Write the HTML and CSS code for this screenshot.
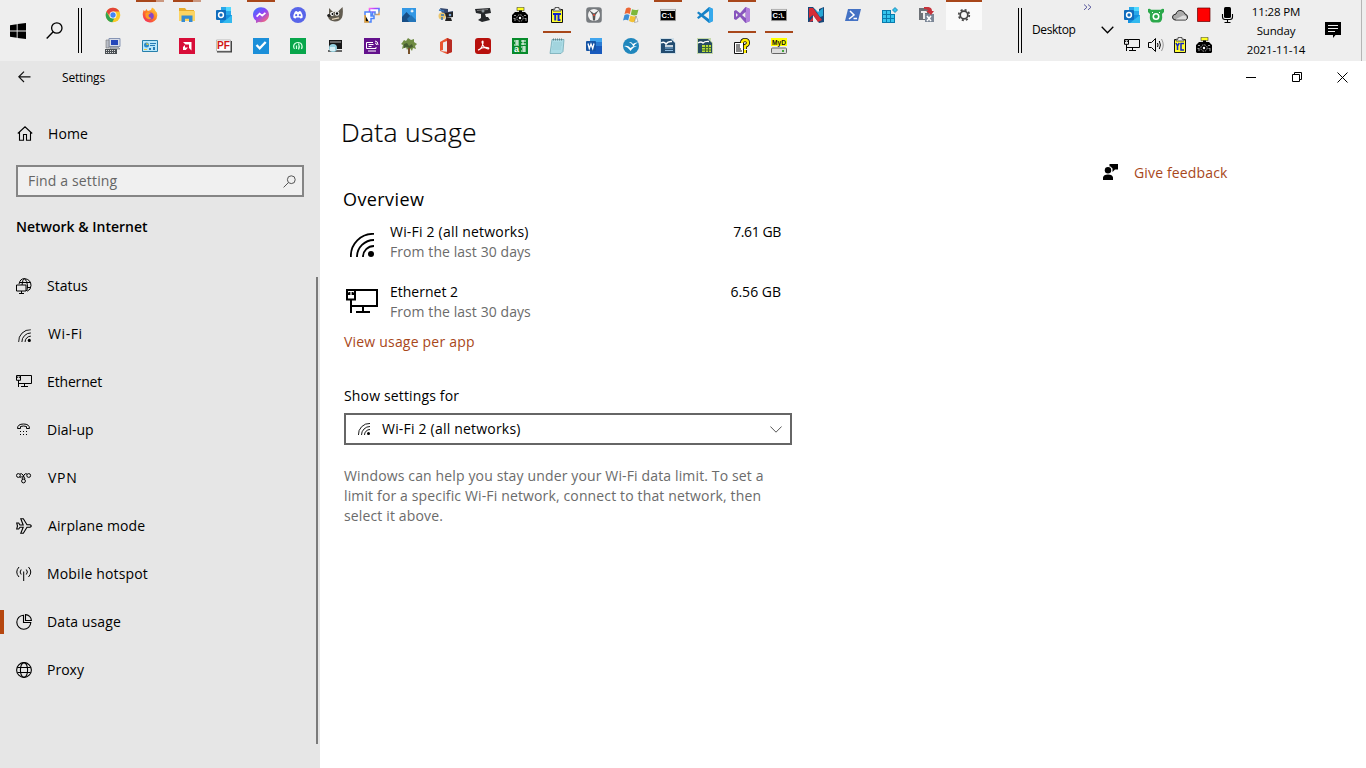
FILE: index.html
```html
<!DOCTYPE html>
<html lang="en">
<head>
<meta charset="utf-8">
<title>Settings</title>
<link rel="stylesheet" href="styles.css">
</head>
<body>
<svg class="defs" width="0" height="0">
  <defs>
    <symbol id="wifi" viewBox="0 0 24 24"><g fill="none" stroke="currentColor" stroke-width="1.8"><path d="M.9 24A22 22 0 0 1 24 .9M7 24A17 17 0 0 1 24 7M13 24A11 11 0 0 1 24 13"/></g><circle cx="21" cy="21" r="3" fill="currentColor"/></symbol>
    <symbol id="ethernet" viewBox="0 0 16 12"><path fill="none" stroke="currentColor" stroke-width="1" d="M4.5.5h11v8H2.5M.5.5h4v4.8h-4zM.5 2.5h1.2v-1M4.5 2.5H3.3v-1M2.5 5.3V12M8.5 8.5v3M5 11.5h7"/></symbol>
    <symbol id="outlook" viewBox="0 0 16 16"><path fill="#28a8ea" d="M5 0h10v11H5z"/><path fill="#50d9ff" d="M10 0h5v4h-5z"/><path fill="#0364b8" d="M5 4h5v4H5z"/><path fill="#1490df" d="M4 8l12 0v8H4z"/><path fill="#32b9ee" d="M16 8v8H6z"/><rect y="3" width="10" height="10" rx="1" fill="#0f6cbd"/><circle cx="5" cy="8" r="2.4" fill="none" stroke="#fff" stroke-width="1.5"/></symbol>
    <symbol id="cmd" viewBox="0 0 16 16"><path fill="#000" stroke="#aaa" stroke-width=".7" d="M.4 2.4h15.2v11.2H.4z"/><path fill="#ddd" d="M1 2.5h14V4H1z"/><text x="1.6" y="10.8" class="tiny" fill="#fff" textLength="12" lengthAdjust="spacingAndGlyphs">C:\.</text></symbol>
    <symbol id="camera" viewBox="0 0 16 16"><path fill="#ff2" stroke="#333" stroke-width=".6" d="M5 .3h7v3.4H5z"/><path fill="#000" d="M7 3.5h3V5h3l3 3v7l-1 1H1l-1-1V8l3-3h4z"/><g fill="#999"><path d="M2 8h2v1H2zM1.5 11h2v3h-1v-2h-1zM12.500 11h2v3h-1v-2h-1zM12 8h2v1h-2z"/></g><circle cx="8" cy="11" r="3.200" fill="#000" stroke="#aaa" stroke-dasharray="1.500 1"/><circle cx="8" cy="11" r="1.200" fill="#fff"/></symbol>
    <symbol id="clip" viewBox="0 0 16 16"><path fill="#ff3" stroke="#111" d="M2.500 2.500h11v13h-11z"/><path fill="#eee" stroke="#333" stroke-width=".8" d="M6 .5h4v1.700h2V4H4V2.200h2z"/><path fill="none" stroke="#12c" stroke-width="1.900" d="M4 7h8M6.200 7v6.500M9.500 7v6h2"/></symbol>
    <symbol id="clipvc" viewBox="0 0 16 16"><path fill="#ff3" stroke="#111" d="M2.500 2.500h11v13h-11z"/><path fill="#eee" stroke="#333" stroke-width=".8" d="M6 .5h4v1.700h2V4H4V2.200h2z"/><path fill="none" stroke="#12c" stroke-width="1.500" d="M4 6l1.500 3L7.300 6M5.500 9v4M12 6.500H9V13h3"/></symbol>
    <symbol id="globe" viewBox="0 0 16 16"><g fill="none" stroke="currentColor" stroke-width="1.100"><circle cx="8" cy="8" r="7.400"/><ellipse cx="8" cy="8" rx="3.600" ry="7.400"/><path d="M1.400 5.500h13.200M1.400 10.500h13.200"/></g></symbol>
    <linearGradient id="msg" x2=".8" y2="1"><stop stop-color="#2a7fff"/><stop offset=".5" stop-color="#8c45fa"/><stop offset="1" stop-color="#ff6d70"/></linearGradient>
    <linearGradient id="fox" x1="1" x2=".2" y2="1"><stop stop-color="#ffe03a"/><stop offset=".55" stop-color="#ff7b25"/><stop offset="1" stop-color="#f2275c"/></linearGradient>
    <linearGradient id="rainbow" y2="1"><stop stop-color="#f6e"/><stop offset=".3" stop-color="#a4f"/><stop offset=".6" stop-color="#48f"/><stop offset="1" stop-color="#fa3"/></linearGradient>
  </defs>
</svg>

<header class="taskbar">
  <button class="start" aria-label="Start"><svg width="16" height="16" viewBox="0 0 16 16"><path d="M0 2.200l6.700-1V7.500H0zM7.600 1L16 0v7.500H7.600zM0 8.400h6.700v6.400L0 13.800zM7.600 8.400H16V16l-8.400-1.100z"/></svg></button>
  <button class="find" aria-label="Search"><svg width="17" height="17" viewBox="0 0 17 17"><circle cx="10.800" cy="6" r="5.200" fill="none" stroke="#000" stroke-width="1.300"/><path d="M7.200 9.800L.7 16.400" stroke="#000" stroke-width="1.400"/></svg></button>
  <div class="grip"></div>

  <div class="apps">
    <div class="app"><svg viewBox="0 0 16 16"><circle cx="8" cy="8" r="7.300" fill="#f9c928"/><path fill="#e2443a" d="M1.400 4.800A7.300 7.300 0 0 1 14.400 4.600H8L5 9z"/><path fill="#31a350" d="M1.500 4.700L5 10.500l4.300.8-2 4A7.300 7.300 0 0 1 1.500 4.700z"/><circle cx="8" cy="8" r="3.500" fill="#fff"/><circle cx="8" cy="8" r="2.700" fill="#4285f4"/></svg></div>
    <div class="app run multi"><svg viewBox="0 0 16 16"><path fill="url(#fox)" d="M1.600 3L3 4.200 4.400 2 5.800 4 9 3 10 .4Q13 1.800 13.500 4l1.300 1.400Q16.500 11 12.400 14 8 17 3.500 14.100 -.8 10.500 1.600 3z"/><circle cx="8.200" cy="9" r="3.600" fill="#8546c9"/><path fill="#ff9b24" d="M3.400 6.500Q6 4.400 8.800 6.200L6.800 7.600Q5.700 10.500 9.400 11 8 13 5 11.600 3 10 3.400 6.500z"/></svg></div>
    <div class="app run multi"><svg viewBox="0 0 16 16"><path fill="#e8ad2b" d="M0 1h6l1.500 2H15v4H0z"/><path fill="#fcd462" d="M0 4h16v10H0z"/><path fill="#358bd2" d="M2.500 8.500h11V15H10v-3.200H6V15H2.500z"/></svg></div>
    <div class="app"><svg><use href="#outlook"/></svg></div>
    <div class="app run"><svg viewBox="0 0 16 16"><path fill="url(#msg)" d="M8 .2c4.600 0 8 3.300 8 7.500s-3.400 7.500-8 7.500l-2.200-.3L3 16v-2.400C1 12.200 0 10 0 7.700 0 3.500 3.400.2 8 .2z"/><path fill="none" stroke="#fff" stroke-width="1.700" d="M3.600 9.700l3-3 2.600 2 3.200-2.800"/></svg></div>
    <div class="app"><svg viewBox="0 0 16 16"><circle cx="8" cy="8" r="8" fill="#5865e9"/><path fill="#fff" d="M5 4.500l1.700-.5.5.8h1.600l.5-.8 1.700.5q1.800 3 1.700 6-1.200 1-2.300 1l-.8-1H6.400l-.8 1q-1.200 0-2.300-1Q3.200 7.500 5 4.500z"/><circle cx="6.200" cy="8.200" r="1.100" fill="#5865e9"/><circle cx="9.800" cy="8.200" r="1.100" fill="#5865e9"/></svg></div>
    <div class="app"><svg viewBox="0 0 16 16"><path fill="#625c50" d="M2 1l4 4 5-.5L15.500 0q1 6-.5 10.500-2 4-7 4-6-.5-7-4.500L0 8l2-1z"/><circle cx="5" cy="7" r="2" fill="#fff"/><circle cx="10" cy="6.500" r="2.200" fill="#fff"/><circle cx="5.500" cy="7" r="1"/><circle cx="10" cy="6.500" r="1.200"/><path stroke="#e8d7ba" stroke-width="1.300" d="M5 12.300l7-1.500"/><circle cx="2" cy="8.500" r="1.600" fill="#222"/></svg></div>
    <div class="app"><svg viewBox="0 0 16 16"><path fill="#fff" stroke="url(#rainbow)" stroke-width="1.600" d="M5.500 1.500H15v6h-4V5H8.500v3h-3z"/><path fill="#fff" stroke="#4b83fa" stroke-width="1.500" d="M1 5h6v4h3v2.500H7V15H1z"/><path stroke="#f9b13c" stroke-width="1.500" d="M1 8v7h4"/></svg></div>
    <div class="app"><svg viewBox="0 0 16 16"><path fill="#3398e5" d="M1 1h14v14H1z"/><path fill="#174e86" d="M1 10l4.500-5L15 15H1z"/><path fill="#2375b9" d="M6 12l4-4 5 5v2H8z"/><path fill="#fff" d="M11 2l.7 1.500 1.500.6-1.500.6L11 6l-.6-1.300L9 4.100l1.400-.6z"/></svg></div>
    <div class="app"><svg viewBox="0 0 16 16"><path fill="#35486e" d="M2 1l8 1v3l5-1v5H7L4 6z"/><path fill="#222" d="M7 6l8-1v5l-7 1zM8 11h5l1 3H7z"/><circle cx="4" cy="9" r="3.500" fill="#ebc76f"/><path stroke="#3276bb" stroke-width="1.500" d="M1 3l5 1M3 8h3M4 10v3"/><circle cx="12" cy="8" r="1.300" fill="#7ba6d3"/></svg></div>
    <div class="app"><svg viewBox="0 0 16 16"><path fill="#25282b" d="M0 2l15-1 1 5-6 1 1 3h2l2 3-8 2-4-2 3-2V7L1 6z"/><path stroke="#777" d="M2 3.500l11-1"/><circle cx="8" cy="4" r="1.500" fill="#8d969b"/></svg></div>
    <div class="app"><svg><use href="#camera"/></svg></div>
    <div class="app"><svg><use href="#clip"/></svg></div>
    <div class="app"><svg viewBox="0 0 16 16"><rect x=".2" y=".2" width="15.600" height="15.600" rx="3" fill="#777b7f"/><circle cx="8" cy="8" r="6" fill="#f2f2f2"/><path fill="#555" d="M3 3l5 3.500L13 3 9.500 8 9 13.500H7L6.500 8z"/><circle cx="8" cy="8" r="1" fill="#e94934"/></svg></div>
    <div class="app"><svg viewBox="0 0 16 16"><path fill="#ec6634" d="M3 1.500q3-2 5 0L6.800 7Q4.500 5.500 1.500 7z"/><path fill="#7db83b" d="M9 2.200q3 1.500 6.500.3L14 8Q11 9 7.800 7.500z"/><path fill="#3d8ed6" d="M1.500 8q2.500-1.500 5 0l-1.300 5.500Q3 12 0 13.500z"/><path fill="#f3c133" d="M7.500 8.500q3 1.500 6 .5L12 14.500q-3 1.500-6-.5z"/><path d="M13 9l2 5.500-3.500 1z" fill="#fff" stroke="#777" stroke-width=".5"/></svg></div>
    <div class="app run"><svg><use href="#cmd"/></svg></div>
    <div class="app"><svg viewBox="0 0 16 16"><path fill="#1682c7" d="M12 0l4 2v12l-4 2L0 6l1.500-1.500L12 12V4L1.500 12 0 10.500z"/><path fill="#36a9ec" d="M12 0l4 2v12l-4 2z"/></svg></div>
    <div class="app run"><svg viewBox="0 0 16 16"><path fill="#8754bd" d="M0 4l2-1 4 3.200L11.500 0 16 2v12l-4.500 2L6 9.800 2 13l-2-1zm2 2v4l2-2zm9.500-1L8 8l3.500 3z" fill-rule="evenodd"/><path fill="#b180dc" d="M12 .300L16 2v12l-4 1.800z"/></svg></div>
    <div class="app"><svg><use href="#cmd"/></svg></div>
    <div class="app"><svg viewBox="0 0 16 16"><path fill="#174879" d="M0 0h5l6 7V2l5-2v15l-5 1-6-8v7H0z"/><path fill="#d52d36" d="M1 1h4l9 12-4 2-5-7-4 3zM1 15l4-5v4z"/><path fill="#27a7d5" d="M6 1l4 4 5-4v8l-3 1z"/></svg></div>
    <div class="app"><svg viewBox="0 0 16 16"><path fill="#4472c4" d="M3 2h13l-3 12H0z"/><path fill="none" stroke="#fff" stroke-width="1.500" d="M5 4l4 4-5 4M8.500 11.500H12"/></svg></div>
    <div class="app"><svg viewBox="0 0 16 16"><path fill="#087bad" d="M0 3h9v4h4v9H0z"/><g fill="#35c5ed"><path d="M1 4h3v3H1zM5 4h3v3H5zM1 8h3v3H1zM5 8h3v3H5zM9 8h3v3H9zM1 12h3v3H1zM5 12h3v3H5zM9 12h3v3H9z"/><path stroke="#087bad" stroke-width=".8" d="M13 .500L15.500 3 13 5.500 10.500 3z"/></g></svg></div>
    <div class="app"><svg viewBox="0 0 16 16"><path fill="#6d7176" d="M0 1h10v12H0z"/><path fill="#eee" d="M2 4h6v2H6v6H4V6H2z"/><path fill="#7c8797" d="M6 7h9v8H6z"/><path stroke="#fff" stroke-width="1.500" d="M8 9l4 5M12 9l-4 5"/><path fill="#c6323b" d="M5 0q8-1 8 4h2l-3 4-5-4h2Q9 2 5 2z"/></svg></div>
    <div class="app run active"><svg viewBox="0 0 16 16"><g fill="none" stroke="#444"><circle cx="8" cy="8" r="3.800" stroke-width="1.700"/><circle cx="8" cy="8" r="5.300" stroke-width="1.700" stroke-dasharray="2.080 2.080"/></g></svg></div>

    <div class="app"><svg viewBox="0 0 16 16"><path fill="#d7dce8" stroke="#8795b4" d="M4 .5h11v8H4z"/><path fill="#2446ba" d="M6 2h7v5H6z"/><path fill="#b8bdc7" stroke="#777" stroke-width=".6" d="M1 2h3v8H1zM5 9h8l2 2H5z"/><path fill="#4b5054" d="M0 11h12v5H0z"/><path stroke="#ddd" stroke-dasharray="1 1" d="M1 12.500h10M1 14.500h10"/></svg></div>
    <div class="app"><svg viewBox="0 0 16 16"><path fill="#b9e7fa" stroke="#267faa" d="M.5 2.500h15v11H.5z"/><circle cx="4.500" cy="7" r="2.500" fill="#2a8bc9"/><path fill="#e9c93c" d="M4.500 7V4.500L7 7zM2 11h3v1H2z"/><path fill="#287db5" d="M8 5h6v1H8zM8 7h5v1H8zM7 10h2v2H7zM11 9h2v3h-2z"/></svg></div>
    <div class="app"><svg viewBox="0 0 16 16"><path fill="#d80d38" d="M0 0h16v16H0z"/><path fill="#fff" d="M4 4h8.500v8.500L10 10V6.500H6.500zM6 7v2.500h3L6.800 12H4V9z"/></svg></div>
    <div class="app"><svg viewBox="0 0 16 16"><path fill="#444" d="M1 3h15v11.500H1z"/><path fill="#fff" stroke="#999" stroke-width=".6" d="M.5 2h14v11H.5z"/><text x="1" y="11.300" class="pf" textLength="13" lengthAdjust="spacingAndGlyphs">PF</text></svg></div>
    <div class="app"><svg viewBox="0 0 16 16"><path fill="#1b8fd9" d="M0 0h16v16H0z"/><path fill="none" stroke="#fff" stroke-width="2.300" d="M3.500 7l3.200 3.300 6-6.300"/></svg></div>
    <div class="app"><svg viewBox="0 0 16 16"><path fill="#08a64b" d="M0 0h16v16H0z"/><path fill="none" stroke="#d5ffe3" stroke-width="1.200" d="M4.500 11Q2.500 8 5 5.500q3-2 6 0Q13 8 11.500 11M6.500 11V7.500M8.500 5.500q1.500 3 0 6"/></svg></div>
    <div class="app"><svg viewBox="0 0 16 16"><path fill="#171717" d="M2 2h13v9H2z"/><path fill="#666" d="M3 3h11v2H3zM1 12h14v2H1z"/><circle cx="6" cy="10" r="4" fill="#95d0df"/><path fill="#d5eef4" d="M3 9h5v4H3z"/></svg></div>
    <div class="app"><svg viewBox="0 0 16 16"><path fill="#63118c" d="M0 0h16v16H0z"/><path fill="none" stroke="#fff" d="M9 4.500H2.500v6H12V9M4 13h8M4.500 6.500h5M4.500 8.500h3M11 3q3 0 3 4M11 5q1.500 0 1.500 2"/></svg></div>
    <div class="app"><svg viewBox="0 0 16 16"><path stroke="#77512a" stroke-width="2" d="M8 7v9"/><path fill="#6f8b43" d="M1 5l2-3 2 1 2-3 3 2 3-1v3l3 2-2 2 1 3-3-1-1 3-3-4-2 3-1-3-4 2 1-4-2-1z"/><path fill="#465d31" d="M3 6l3-1 2 3 3-2 1 3-3 1-3-1-3 1z"/></svg></div>
    <div class="app"><svg viewBox="0 0 16 16"><path fill="#ea542f" d="M2 4l7-4 5 2v12l-5 2-7-3 7 .8V3L5 4.500V12l-3 1z"/><path fill="#b82b23" d="M9 0l5 2v12l-5 2z"/></svg></div>
    <div class="app"><svg viewBox="0 0 16 16"><rect width="16" height="16" rx="3" fill="#b7100c"/><path fill="none" stroke="#fff" stroke-width="1.200" d="M3 12q4-1 5-7 .3-3-1-1 1 6 6 7 2-1-1-1.500Q7 9 3.500 12z"/></svg></div>
    <div class="app"><svg viewBox="0 0 16 16"><path fill="#078b2b" d="M0 0h16v16H0z"/><text x="2" y="14" class="abc">a</text><path fill="none" stroke="#fff" d="M2 3h5M3 5h4M2 7h5M5 2v5M9 3h5M11 2v5M9 6h5M9 9h5M10 11h4M9 13h5M12 8v6"/></svg></div>
    <div class="app run"><svg viewBox="0 0 16 16"><path fill="#acdce6" stroke="#67a4af" stroke-width=".7" d="M3 1.500h12l-1 12-2 2H1z"/><path stroke="#8fc3cf" stroke-width=".6" d="M4 5h9M4 7h9M3 9h9M3 11h9"/><path stroke="#628087" stroke-dasharray="1 1" stroke-width="2" d="M4 1.500h10"/></svg></div>
    <div class="app"><svg viewBox="0 0 16 16"><path fill="#41a5ee" d="M4 0h12v4H4z"/><path fill="#2b7cd3" d="M4 4h12v4H4z"/><path fill="#185abd" d="M4 8h12v8H4z"/><rect y="3" width="10" height="10" rx="1" fill="#1554a5"/><path fill="none" stroke="#fff" stroke-width="1.300" d="M2 5.500l1.300 5L5 6l1.700 4.500 1.300-5"/></svg></div>
    <div class="app"><svg viewBox="0 0 16 16"><circle cx="8" cy="8" r="8" fill="#2087bd"/><path fill="#fff" d="M6 4q2.500-.5 4 2Q12 4 15 4.500q-3 1-4.500 4Q9 5 6 4zM1 8q4-1 6.500 2Q10 7.500 14 8q-4 1-6.500 5Q5 9 1 8z"/></svg></div>
    <div class="app"><svg viewBox="0 0 16 16"><path fill="#d0dfe8" d="M0 0h14v3l2 2v11H0z"/><path fill="#234c70" d="M1 1h10l4 4v10H1z"/><path stroke="#8dbbe1" d="M5 10h8M5 12.500h8"/><path fill="none" stroke="#fff" stroke-width="1.500" d="M1 5q3-2 5 1 2-3 6-2.500M5 8h8"/></svg></div>
    <div class="app"><svg viewBox="0 0 16 16"><path fill="#c5d9a9" d="M0 0h14v3l2 2v11H0z"/><path fill="#254b62" d="M1 1h10l4 4v10H1z"/><path fill="#b8dc36" d="M5 7h9v7H5z"/><path fill="none" stroke="#fff" stroke-width="1.300" d="M1 5q3-2 5 0 2-2 6-1.500"/><path stroke="#3d6931" d="M5 9.500h9M5 12h9M8.500 7v7M11.500 7v7"/></svg></div>
    <div class="app run"><svg viewBox="0 0 16 16"><path fill="#fff" stroke="#111" d="M.5 4.500h9v11h-9z"/><path stroke="#111" d="M2 7h4M2 9h4M2 11h5M2 13h6"/><path fill="none" stroke="#111" stroke-width="4" d="M8 5Q8 2 11 2t3 3q0 2-3 3v3m0 1v3"/><path fill="none" stroke="#fe0" stroke-width="2.300" d="M8 5Q8 2 11 2t3 3q0 2-3 3v3m0 1v3"/></svg></div>
    <div class="app run"><svg viewBox="0 0 16 16"><path fill="#ff0" d="M0 0h16v8H0z"/><text x="1" y="6.800" class="tiny" fill="#111" textLength="14" lengthAdjust="spacingAndGlyphs">MyD</text><rect x=".5" y="10" width="15" height="5.500" rx="1" fill="#ddd" stroke="#666"/><path fill="#42a33b" d="M11 12h2v2h-2z"/></svg></div>
  </div>

  <div class="grip"></div>
  <div class="toolbar"><span>Desktop</span></div>
  <div class="chevrons"><svg class="more" width="9" height="7" viewBox="0 0 9 7"><path d="M1 .5l3 2.700-3 2.700M5 .5l3 2.700-3 2.700" fill="none" stroke="#5a5a9e"/></svg><svg class="down" width="13" height="8" viewBox="0 0 13 8"><path d="M.7.8l5.800 6 5.800-6" fill="none" stroke="#000" stroke-width="1.300"/></svg></div>
  <div class="tray">
    <svg><use href="#outlook"/></svg>
    <svg viewBox="0 0 16 16"><path fill="#2ba84b" d="M0 2q2-1 3 .8h10Q14 1 16 2v3l-2 2q1 8-3 8.500H5Q1 15 2 7L0 5z"/><circle cx="8" cy="9.500" r="3.500" fill="#fff"/><circle cx="8" cy="9.500" r="1.900" fill="#2ba84b"/><path stroke="#fff" d="M4 5.500h1M11 5.500h1"/></svg>
    <svg viewBox="0 0 16 16"><path fill="#aaa" stroke="#222" d="M3 13Q.5 12.500.5 10T4 7q1-4 5-3.500 3 .5 4 3.500 2.500.5 2.500 3t-2 3z"/><path fill="#ddd" d="M4 12l7-3.500q3-.5 3.500 2t-1.500 2H4z"/></svg>
    <svg viewBox="0 0 16 16"><path fill="red" stroke="#600" stroke-width=".7" d="M1.500 1h12.500v13.500H1.500z"/></svg>
    <svg viewBox="0 0 16 16"><rect x="4" width="7" height="11" rx="1.500"/><path fill="none" stroke="#000" stroke-width="1.100" d="M2.500 7v3q0 2.500 2.500 2.500h5q2.500 0 2.500-2.500V7M7.500 12.500v3M4.500 15.500h6"/></svg>
    <svg viewBox="0 -2 16 16"><use href="#ethernet" width="16" height="12"/></svg>
    <svg viewBox="0 0 16 16"><g fill="none" stroke="#000"><path d="M.5 5.500h3l4-4v13l-4-4h-3zM9.500 6q1 2 0 4M11.300 4q2.200 4 0 8"/><path stroke="#999" d="M13.500 2q3.500 6 0 12"/></g></svg>
    <svg><use href="#clipvc"/></svg>
    <svg><use href="#camera"/></svg>
  </div>
  <div class="clock"><span class="t1">11:28 PM</span><span class="t2">Sunday</span><span class="t3">2021-11-14</span></div>
  <svg class="notify" width="16" height="16" viewBox="0 0 16 16"><path d="M0 0h16v13H10.500L8 16v-3H0z"/><path d="M3 3.500h10M3 6.500h10M3 9.500h7" stroke="#eee"/></svg>
  <div class="peek"></div>
</header>

<div class="window">
  <aside class="sidebar">
    <div class="titlebar"><svg width="13" height="12" viewBox="0 0 13 12"><path d="M6 .6L.8 5.800 6 11M1 5.800h11.500" fill="none" stroke="#111" stroke-width="1.200"/></svg><span>Settings</span></div>
    <a class="home"><svg width="16" height="15" viewBox="0 0 16 15"><path d="M.8 7.500L8 .8l7.200 6.700M2.500 6.200v8h4V8.500h3v5.700h4v-8" fill="none" stroke="#000" stroke-width="1.100"/></svg><span>Home</span></a>
    <div class="search"><span>Find a setting</span><svg width="13" height="13" viewBox="0 0 13 13"><circle cx="8.300" cy="4.700" r="3.900" fill="none" stroke="#555"/><path d="M5.500 7.500L.6 12.400" stroke="#555"/></svg></div>
    <h2>Network &amp; Internet</h2>
    <nav>
      <a><svg viewBox="0 0 16 16"><g fill="none" stroke="#000"><path d="M3 6Q4 .6 8.500.6 15 1.500 15 7.500q0 4.500-4 5.800M6 7q.5-6 2.500-6.400Q11.500 3 11.500 8T10 13M4 4.500h10.500M11 9.500h4M.5 7h9.500v6H.5zM5.500 13v2.500M3 15.500h5"/></g></svg><span class="status">Status</span></a>
      <a><svg viewBox="-4 -6 30 30"><use href="#wifi" width="24" height="24"/></svg><span class="wf">Wi-Fi</span></a>
      <a><svg viewBox="0 -1 16 16"><use href="#ethernet" width="16" height="12"/></svg><span class="eth">Ethernet</span></a>
      <a><svg viewBox="0 0 16 16"><path d="M1.500 6.500Q1.500 2 7.500 2t6 4.500h-3v-2q-3-1-6 0v2z" fill="none" stroke="#000"/><path d="M4 9.500h8M4 12.500h8" stroke="#000" stroke-dasharray="1 2"/></svg><span class="dial">Dial-up</span></a>
      <a><svg viewBox="0 0 16 16"><g fill="none" stroke="#000"><circle cx="2.400" cy="5.500" r="1.900"/><circle cx="12.700" cy="5.500" r="1.900"/><circle cx="7.500" cy="11" r="1.900"/><path d="M4 4q2-1 3 1l2 4M11 4Q9 3 8 5L6 9M3.500 7q2 1 3-1"/></g></svg><span class="vpn">VPN</span></a>
      <a><svg viewBox="0 0 16 16"><path d="M.7 5h2l1.200 2h3.300L4.800.7h2.500L11 6.800h3q2.600 1.200 0 2.400h-3l-3.700 6.100H4.800L7.200 9.200H4L2.700 11h-2l.8-3z" fill="none" stroke="#000" stroke-width="1.100"/></svg><span class="air">Airplane mode</span></a>
      <a><svg viewBox="0 0 16 16"><path d="M3 1Q-1.500 6 3 11M5.200 3.500Q3 6 5.200 8.500M12.500 1Q17 6 12.500 11M10.300 3.500Q12.500 6 10.300 8.500M7.700 5.500V15" fill="none" stroke="#000"/></svg><span class="mob">Mobile hotspot</span></a>
      <a class="selected"><svg viewBox="0 0 16 16"><path d="M7.500 1.200a7 7 0 1 0 7.300 7.300H7.500zM9.500.6v5.900h5.900A6 6 0 0 0 9.500.6z" fill="none" stroke="#000" stroke-width="1.100"/></svg><span class="data">Data usage</span></a>
      <a><svg viewBox="0 0 16 16"><use href="#globe"/></svg><span class="proxy">Proxy</span></a>
    </nav>
    <div class="scroll"></div>
  </aside>

  <main>
    <div class="controls">
      <svg width="10" height="11" viewBox="0 0 10 11"><path d="M0 5.500h10" stroke="#000"/></svg>
      <svg width="10" height="10" viewBox="0 0 10 10"><path d="M.5 2.500h7v7h-7zM2.500 2.500v-2h7v7h-2" fill="none" stroke="#000"/></svg>
      <svg width="11" height="11" viewBox="0 0 11 11"><path d="M.5.5l10 10m0-10l-10 10" stroke="#000"/></svg>
    </div>
    <div class="content">
      <section class="page">
        <h1>Data usage</h1>
        <h3>Overview</h3>
        <div class="usage">
          <svg class="bigwifi" width="24" height="24"><use href="#wifi"/></svg>
          <div class="names"><span class="name">Wi-Fi 2 (all networks)</span><span class="muted period">From the last 30 days</span></div>
          <span class="amount">7.61 GB</span>
        </div>
        <div class="usage">
          <svg class="bigeth" width="32" height="24"><use href="#ethernet"/></svg>
          <div class="names"><span>Ethernet 2</span><span class="muted period">From the last 30 days</span></div>
          <span class="amount wide">6.56 GB</span>
        </div>
        <a class="link view">View usage per app</a>
        <label>Show settings for</label>
        <div class="select"><svg width="12" height="12"><use href="#wifi"/></svg><span>Wi-Fi 2 (all networks)</span><svg width="12" height="7" viewBox="0 0 12 7"><path d="M.4.500L6 6.200 11.600.5" fill="none" stroke="#555"/></svg></div>
        <p class="muted">Windows can help you stay under your Wi-Fi data limit. To set a<br>limit for a specific Wi-Fi network, connect to that network, then<br>select it above.</p>
      </section>
      <a class="link feedback"><svg width="15" height="16" viewBox="0 0 15 16"><circle cx="5" cy="6.200" r="3.200"/><path d="M0 16v-2.500Q.5 10.500 5 10.500t5 3V16zM6.500 0H15v5.500h-3L9.500 8V4.500L7.500 2.500h-1z"/></svg><span>Give feedback</span></a>
    </div>
  </main>
</div>
</body>
</html>
```
FILE: styles.css
```css
* { box-sizing: border-box; }
body {
  margin: 0;
  width: 1366px;
  height: 768px;
  overflow: hidden;
  background: #fff;
  color: #000;
  font: 14px/20px "Open Sans", "Noto Sans", sans-serif;
}
svg { display: block; flex: none; }
span { white-space: nowrap; }
.defs { position: absolute; }
h1, h2, h3, p { margin: 0; font-weight: 400; }

.taskbar { display: flex; height: 61px; background: #eee; }
.taskbar button { border: 0; padding: 0; background: none; }
.start { width: 16px; margin-left: 10px; }
.find { width: 17px; margin-left: 20px; }
.grip { width: 4px; height: 45px; margin: 8px 0 0 15px; border: solid #000; border-width: 0 1px; flex: none; }
.apps {
  display: grid;
  grid-template-columns: repeat(24, 37px);
  grid-template-rows: 30px 30px;
  row-gap: 1px;
  margin-left: 13px;
}
.app { display: flex; align-items: center; justify-content: center; width: 36px; }
.app svg { width: 16px; height: 16px; }
.app.run { background: linear-gradient(#a8471a, #a8471a) 4px 0 / 28px 2px no-repeat; }
.app.multi { background: linear-gradient(90deg, #a8471a 20px, #cb9880 20px) 4px 0 / 28px 2px no-repeat; }
.app.active { background: linear-gradient(#a8471a, #a8471a) 0 0 / 36px 2px no-repeat #fafafa; }
.apps + .grip { margin-left: 35px; }
.tiny { font: bold 6.5px "Liberation Sans", sans-serif; }
.pf { font: bold 10px "Liberation Sans", sans-serif; fill: #d01818; }
.abc { font: bold 9px "Liberation Sans", sans-serif; fill: #fff; }

.toolbar { width: 62px; padding: 20px 0 0 10px; font-size: 12px; letter-spacing: -.4px; }
.chevrons { width: 30px; }
.more { margin: 4px 0 0 -1px; }
.down { margin: 15px 0 0 17px; }
.tray {
  display: grid;
  grid-template-columns: repeat(5, 24px);
  grid-template-rows: 30px 30px;
  align-items: center;
  margin-left: 10px;
}
.tray svg { width: 16px; height: 16px; }
.clock { width: 64px; padding-top: 2px; display: flex; flex-direction: column; align-items: center; font-size: 11.5px; line-height: 19px; letter-spacing: -.15px; }
.notify { margin: 22px 0 0 17px; }
.peek { width: 5px; margin-left: 20px; border-left: 1px solid #b5b5b5; }

.window { display: flex; height: 707px; }
.sidebar { position: relative; width: 320px; background: #e6e6e6; flex: none; }
.titlebar { display: flex; align-items: center; height: 32px; padding-left: 18px; gap: 31px; font-size: 12px; letter-spacing: -.2px; }
.titlebar span { padding-top: 2px; }
.home { display: flex; align-items: center; gap: 15px; height: 32px; margin-top: 24px; padding-left: 17px; }
.home span { padding-top: 2px; letter-spacing: .1px; }
.search {
  display: flex;
  align-items: center;
  justify-content: space-between;
  width: 288px;
  height: 32px;
  margin: 16px 0 0 16px;
  padding: 0 6px 0 10px;
  border: 2px solid #858585;
  background: #f0f0f0;
  color: #656565;
  letter-spacing: .15px;
}
h2 { margin: 20px 0 0 16px; font-size: 14px; font-weight: 600; line-height: 20px; }
nav { margin-top: 25px; }
nav a { display: flex; align-items: center; height: 48px; padding-left: 16px; gap: 15px; }
nav a svg { width: 16px; height: 16px; }
nav .selected { background: linear-gradient(#b6470f, #b6470f) 0 50% / 4px 24px no-repeat; }
.wf { margin-left: 1px; letter-spacing: .6px; }
.eth { letter-spacing: -.15px; }
.vpn { margin-left: 1px; letter-spacing: .7px; }
.air { margin-left: 1px; letter-spacing: .1px; }
.mob { letter-spacing: .15px; }
.data { letter-spacing: .1px; }
.scroll { position: absolute; right: 2px; top: 216px; width: 2px; height: 467px; background: #7b7b7b; }

main { flex: 1; }
.controls { display: flex; justify-content: flex-end; align-items: center; gap: 36px; height: 32px; padding-right: 18px; }
.controls svg:last-child { margin-left: -1px; }
.content { display: flex; }
.page { width: 448px; margin-left: 24px; }
h1 { margin: 19px 0 0 -3px; font-size: 26.5px; line-height: 40px; font-weight: 300; letter-spacing: .3px; -webkit-text-stroke: .2px #000; }
h3 { margin: 34px 0 0 -1px; font-size: 18px; line-height: 26px; letter-spacing: .4px; }
.usage { display: flex; height: 60px; padding-top: 10px; }
.bigwifi { margin: 11px 10px 0 6px; }
.names { display: flex; flex-direction: column; margin-left: 6px; }
.name { letter-spacing: .2px; }
.period { letter-spacing: .07px; }
.bigeth { margin: 7px 6px 0 2px; }
.amount { margin-left: auto; padding-right: 11px; letter-spacing: -.4px; }
.wide { letter-spacing: 0; }
.muted { color: #6b6b6b; }
.link { color: #a8471a; }
.view { display: block; letter-spacing: .2px; }
label { display: block; margin-top: 34px; letter-spacing: .15px; }
.select { display: flex; align-items: center; width: 448px; height: 32px; margin-top: 7px; padding: 0 8px 0 12px; border: 2px solid #666; }
.select span { margin: 0 auto 0 12px; letter-spacing: .2px; }
p { margin-top: 21px; letter-spacing: .14px; white-space: nowrap; }
.feedback { display: flex; align-items: center; height: 20px; margin: 69px 0 0 311px; gap: 16px; letter-spacing: .15px; }
.feedback span { padding-top: 2px; }
.feedback svg { fill: #000; }
```
